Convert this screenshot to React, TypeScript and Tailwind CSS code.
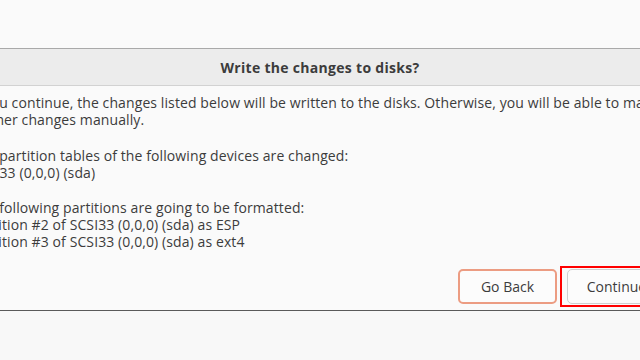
export default function App() {
  return (
    <div className="h-[360px] w-[640px] overflow-hidden bg-[#f8f8f8] font-['Open_Sans',sans-serif] text-[#3c3c3c]">
      <div className="h-[48px] bg-[#fafafa]" />
      <div className="ml-[-49px] w-[738px] border-t border-[#a9a9a9] border-b border-b-[#5a5a5a] bg-[#fafafa]">
        <div className="flex h-[37px] items-center justify-center border-b border-[#d2d2d2] bg-[#ececec] text-[14px] font-bold tracking-[0.3px]">
          Write the changes to disks?
        </div>
        <div className="whitespace-nowrap px-[20px] pt-[8px] text-[14px] leading-[17px] tracking-[0.1px]">
          <div>If you continue, the changes listed below will be written to the disks. Otherwise, you will be able to make</div>
          <div>further changes manually.</div>
          <div className="mt-[19px]">The partition tables of the following devices are changed:</div>
          <div>SCSI33 (0,0,0) (sda)</div>
          <div className="mt-[18px]">The following partitions are going to be formatted:</div>
          <div>Partition #2 of SCSI33 (0,0,0) (sda) as ESP</div>
          <div>Partition #3 of SCSI33 (0,0,0) (sda) as ext4</div>
        </div>
        <div className="mt-[16px] flex items-center justify-end gap-[3px] pb-[3px] pr-[16px]">
          <button className="h-[35px] w-[99px] rounded-[5px] border-2 border-[#ec9c82] bg-[#fcfcfc] text-[14px]">
            Go Back
          </button>
          <div className="border-2 border-[#ff0000] px-[5px] py-[1px]">
            <button className="h-[35px] w-[99px] rounded-[5px] border border-[#cfcfcf] bg-[#fcfcfc] text-[14px]">
              Continue
            </button>
          </div>
        </div>
      </div>
    </div>
  );
}
